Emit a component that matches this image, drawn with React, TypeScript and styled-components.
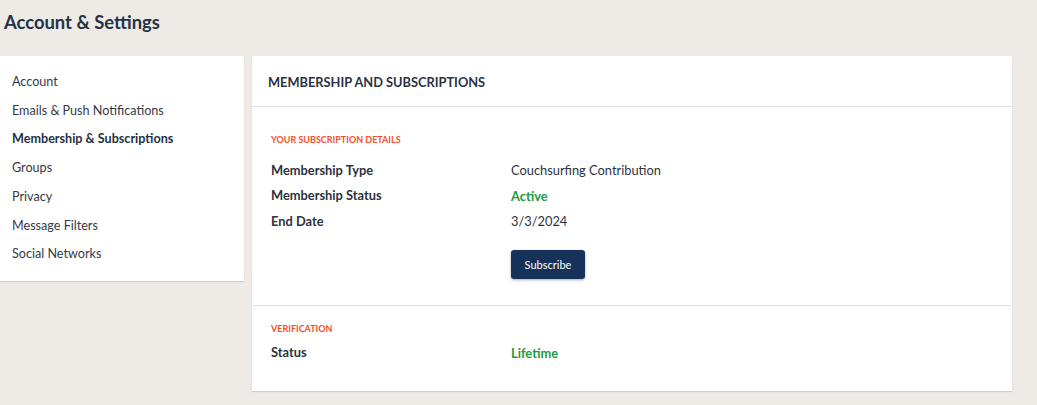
import React from "react";
import styled, { createGlobalStyle } from "styled-components";

const Global = createGlobalStyle`
  html, body { margin: 0; padding: 0; background: #eeebe7; }
  body { font-family: Lato, "Open Sans", sans-serif; color: #2c3341; }
  * { box-sizing: border-box; }
`;

const Page = styled.div`
  padding: 0 25px 0 0;
  min-height: 405px;
`;

const Title = styled.h1`
  margin: 0;
  padding: 11px 0 0 4px;
  height: 56px;
  font-size: 18.4px;
  line-height: 22px;
  font-weight: 700;
  color: #253246;
`;

const Layout = styled.div`
  display: flex;
  align-items: flex-start;
  gap: 8px;
`;

const Sidebar = styled.nav`
  width: 244px;
  flex: none;
  background: #fff;
  padding: 12px 0 12px 12px;
  box-shadow: 0 1px 1px rgba(0, 0, 0, 0.12);
`;

const NavItem = styled.div<{ $active?: boolean }>`
  font-size: 12.6px;
  line-height: 28.7px;
  font-weight: ${(p) => (p.$active ? 700 : 400)};
  color: ${(p) => (p.$active ? "#263143" : "#343a46")};
`;

const Card = styled.section`
  flex: 1;
  background: #fff;
  box-shadow: 0 1px 1px rgba(0, 0, 0, 0.12);
`;

const CardHeader = styled.div`
  height: 51px;
  display: flex;
  align-items: center;
  padding: 1px 16px 0;
  font-size: 12.8px;
  font-weight: 700;
  color: #2a3344;
  border-bottom: 1px solid #e1e0de;
`;

const Section = styled.div<{ $top: number; $bottom: number; $divider?: boolean }>`
  padding: ${(p) => p.$top}px 19px ${(p) => p.$bottom}px;
  border-bottom: ${(p) => (p.$divider ? "1px solid #e1e0de" : "none")};
`;

const SectionLabel = styled.div<{ $gap: number }>`
  font-size: 9px;
  line-height: 12px;
  font-weight: 700;
  text-transform: uppercase;
  color: #f2502c;
  margin-bottom: ${(p) => p.$gap}px;
`;

const Row = styled.div`
  display: grid;
  grid-template-columns: 240px 1fr;
  height: 25.5px;
  align-items: center;
  font-size: 12.85px;
`;

const Label = styled.div`
  font-weight: 700;
  color: #2c3341;
`;

const Value = styled.div<{ $status?: boolean }>`
  font-weight: ${(p) => (p.$status ? 700 : 400)};
  color: ${(p) => (p.$status ? "#1c9a3f" : "#2c3341")};
  padding-top: 1px;
`;

const ButtonRow = styled.div`
  padding-left: 240px;
  margin-top: 16px;
`;

const Button = styled.button`
  width: 74px;
  height: 29px;
  border: none;
  border-radius: 3px;
  background: #16315a;
  color: #fff;
  font-family: Lato, sans-serif;
  font-size: 11px;
  box-shadow: 0 1px 3px rgba(0, 0, 0, 0.35);
  cursor: pointer;
`;

const navItems = [
  "Account",
  "Emails & Push Notifications",
  "Membership & Subscriptions",
  "Groups",
  "Privacy",
  "Message Filters",
  "Social Networks",
];

export default function App() {
  return (
    <Page>
      <Global />
      <Title>Account &amp; Settings</Title>
      <Layout>
        <Sidebar>
          {navItems.map((n) => (
            <NavItem key={n} $active={n === "Membership & Subscriptions"}>
              {n}
            </NavItem>
          ))}
        </Sidebar>
        <Card>
          <CardHeader>MEMBERSHIP AND SUBSCRIPTIONS</CardHeader>
          <Section $top={27} $bottom={26} $divider>
            <SectionLabel $gap={11}>Your subscription details</SectionLabel>
            <Row>
              <Label>Membership Type</Label>
              <Value>Couchsurfing Contribution</Value>
            </Row>
            <Row>
              <Label>Membership Status</Label>
              <Value $status>Active</Value>
            </Row>
            <Row>
              <Label>End Date</Label>
              <Value>3/3/2024</Value>
            </Row>
            <ButtonRow>
              <Button>Subscribe</Button>
            </ButtonRow>
          </Section>
          <Section $top={17} $bottom={26}>
            <SectionLabel $gap={5}>Verification</SectionLabel>
            <Row>
              <Label>Status</Label>
              <Value $status>Lifetime</Value>
            </Row>
          </Section>
        </Card>
      </Layout>
    </Page>
  );
}
